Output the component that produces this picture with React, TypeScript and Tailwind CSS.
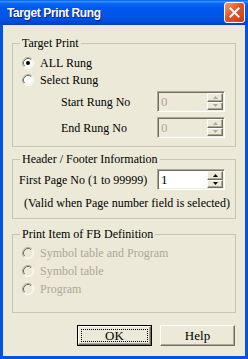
import React from "react";

function Radio({ checked = false, disabled = false }: { checked?: boolean; disabled?: boolean }) {
  return (
    <svg width="12" height="12" viewBox="0 0 12 12" className="shrink-0">
      <circle cx="6" cy="6" r="5" fill={disabled ? "#ece9d8" : "#fff"} />
      <path d="M9.89 2.11 A5.5 5.5 0 0 0 2.11 9.89" fill="none" stroke="#aca899" />
      <path d="M2.11 9.89 A5.5 5.5 0 0 0 9.89 2.11" fill="none" stroke="#fff" />
      <path d="M9.18 2.82 A4.5 4.5 0 0 0 2.82 9.18" fill="none" stroke="#716f64" />
      <path d="M2.82 9.18 A4.5 4.5 0 0 0 9.18 2.82" fill="none" stroke="#f1efe2" />
      {checked && <circle cx="6" cy="6" r="2" fill="#000" />}
    </svg>
  );
}

function SpinHalf({ up, disabled }: { up?: boolean; disabled?: boolean }) {
  return (
    <div className="flex-1 flex items-center justify-center bg-[#ece9d8] border border-t-white border-l-white border-b-[#716f64] border-r-[#716f64] shadow-[inset_-1px_-1px_0_#aca899]">
      <svg width="5" height="3" viewBox="0 0 5 3">
        <path d={up ? "M2.5 0 L5 3 L0 3 Z" : "M0 0 L5 0 L2.5 3 Z"} fill={disabled ? "#aca899" : "#000"} />
      </svg>
    </div>
  );
}

function NumBox({ value, disabled = false }: { value: string; disabled?: boolean }) {
  return (
    <div
      className={`w-[68px] h-[21px] flex border border-t-[#aca899] border-l-[#aca899] border-b-white border-r-white shadow-[inset_1px_1px_0_#716f64,inset_-1px_-1px_0_#f1efe2] p-[1px] ${
        disabled ? "bg-[#ece9d8]" : "bg-white"
      }`}
    >
      <span className={`flex-1 pl-[2px] text-[13px] leading-[17px] ${disabled ? "text-[#aca899]" : "text-black"}`}>
        {value}
      </span>
      <div className="w-[16px] flex flex-col">
        <SpinHalf up disabled={disabled} />
        <SpinHalf disabled={disabled} />
      </div>
    </div>
  );
}

function Group({ title, className = "", children }: { title: string; className?: string; children: React.ReactNode }) {
  return (
    <fieldset className={`border border-[#c8c5b4] ${className}`}>
      <legend className="ml-[7px] px-[2px] bg-[#ece9d8]">{title}</legend>
      {children}
    </fieldset>
  );
}

function Btn({ label, isDefault = false }: { label: string; isDefault?: boolean }) {
  return (
    <div className={`w-[75px] h-[21px] flex ${isDefault ? "border border-black" : ""}`}>
      <div className="flex-1 flex p-[2px] bg-[#ece9d8] border border-t-white border-l-white border-b-[#716f64] border-r-[#716f64] shadow-[inset_-1px_-1px_0_#aca899]">
        <span
          className={`flex-1 flex items-center justify-center text-[13px] ${
            isDefault ? "border border-dotted border-black" : ""
          }`}
        >
          {label}
        </span>
      </div>
    </div>
  );
}

export default function App() {
  return (
    <div className="w-[248px] h-[359px] flex flex-col font-['Liberation_Serif',serif] text-[12px] leading-[14px] text-black select-none">
      <div className="h-[25px] shrink-0 flex items-center justify-between pl-[7px] pr-[3px] bg-[linear-gradient(180deg,#0058ee_0%,#3591ff_6%,#0a6af3_14%,#0058ee_30%,#0055e5_70%,#0048d4_90%,#003dd0_100%)]">
        <span className="font-['Liberation_Sans',Arial,sans-serif] font-bold text-[12px] tracking-[-0.4px] text-white [text-shadow:1px_1px_0_#0f1f7a]">
          Target Print Rung
        </span>
        <div className="w-[21px] h-[21px] flex items-center justify-center rounded-[3px] border border-white bg-[linear-gradient(135deg,#f19d7f_0%,#e0562c_45%,#c3401c_100%)]">
          <svg width="11" height="11" viewBox="0 0 11 11">
            <path d="M1.5 1.5 L9.5 9.5 M9.5 1.5 L1.5 9.5" stroke="#fff" strokeWidth="2" strokeLinecap="square" />
          </svg>
        </div>
      </div>

      <div className="flex-1 flex flex-col bg-[#ece9d8] border-x-[3px] border-b-[3px] border-[#0554e0] px-[9px] pt-[11px]">
        <Group title="Target Print">
          <div className="flex flex-col pt-[4px] pb-[8px]">
            <label className="h-[17px] flex items-center gap-[6px] pl-[9px]">
              <Radio checked />
              <span>ALL Rung</span>
            </label>
            <label className="h-[17px] flex items-center gap-[6px] pl-[9px]">
              <Radio />
              <span>Select Rung</span>
            </label>
            <div className="h-[21px] mt-[3px] flex items-center pl-[48px]">
              <span className="w-[96px]">Start Rung No</span>
              <NumBox value="0" disabled />
            </div>
            <div className="h-[21px] mt-[5px] flex items-center pl-[48px]">
              <span className="w-[96px]">End Rung No</span>
              <NumBox value="0" disabled />
            </div>
          </div>
        </Group>

        <Group title="Header / Footer Information" className="mt-[5px]">
          <div className="flex flex-col pt-[3px] pb-[8px]">
            <div className="h-[21px] flex items-center pl-[6px]">
              <span className="w-[138px]">First Page No (1 to 99999)</span>
              <NumBox value="1" />
            </div>
            <div className="mt-[6px] pl-[11px]">(Valid when Page number field is selected)</div>
          </div>
        </Group>

        <Group title="Print Item of FB Definition" className="mt-[8px]">
          <div className="flex flex-col pt-[3px] pb-[14px] text-[#aca899]">
            <div className="h-[18px] flex items-center gap-[6px] pl-[9px]">
              <Radio disabled />
              <span>Symbol table and Program</span>
            </div>
            <div className="h-[18px] flex items-center gap-[6px] pl-[9px]">
              <Radio disabled />
              <span>Symbol table</span>
            </div>
            <div className="h-[18px] flex items-center gap-[6px] pl-[9px]">
              <Radio disabled />
              <span>Program</span>
            </div>
          </div>
        </Group>

        <div className="mt-[12px] flex justify-end gap-[8px] pr-[1px]">
          <Btn label="OK" isDefault />
          <Btn label="Help" />
        </div>
      </div>
    </div>
  );
}
